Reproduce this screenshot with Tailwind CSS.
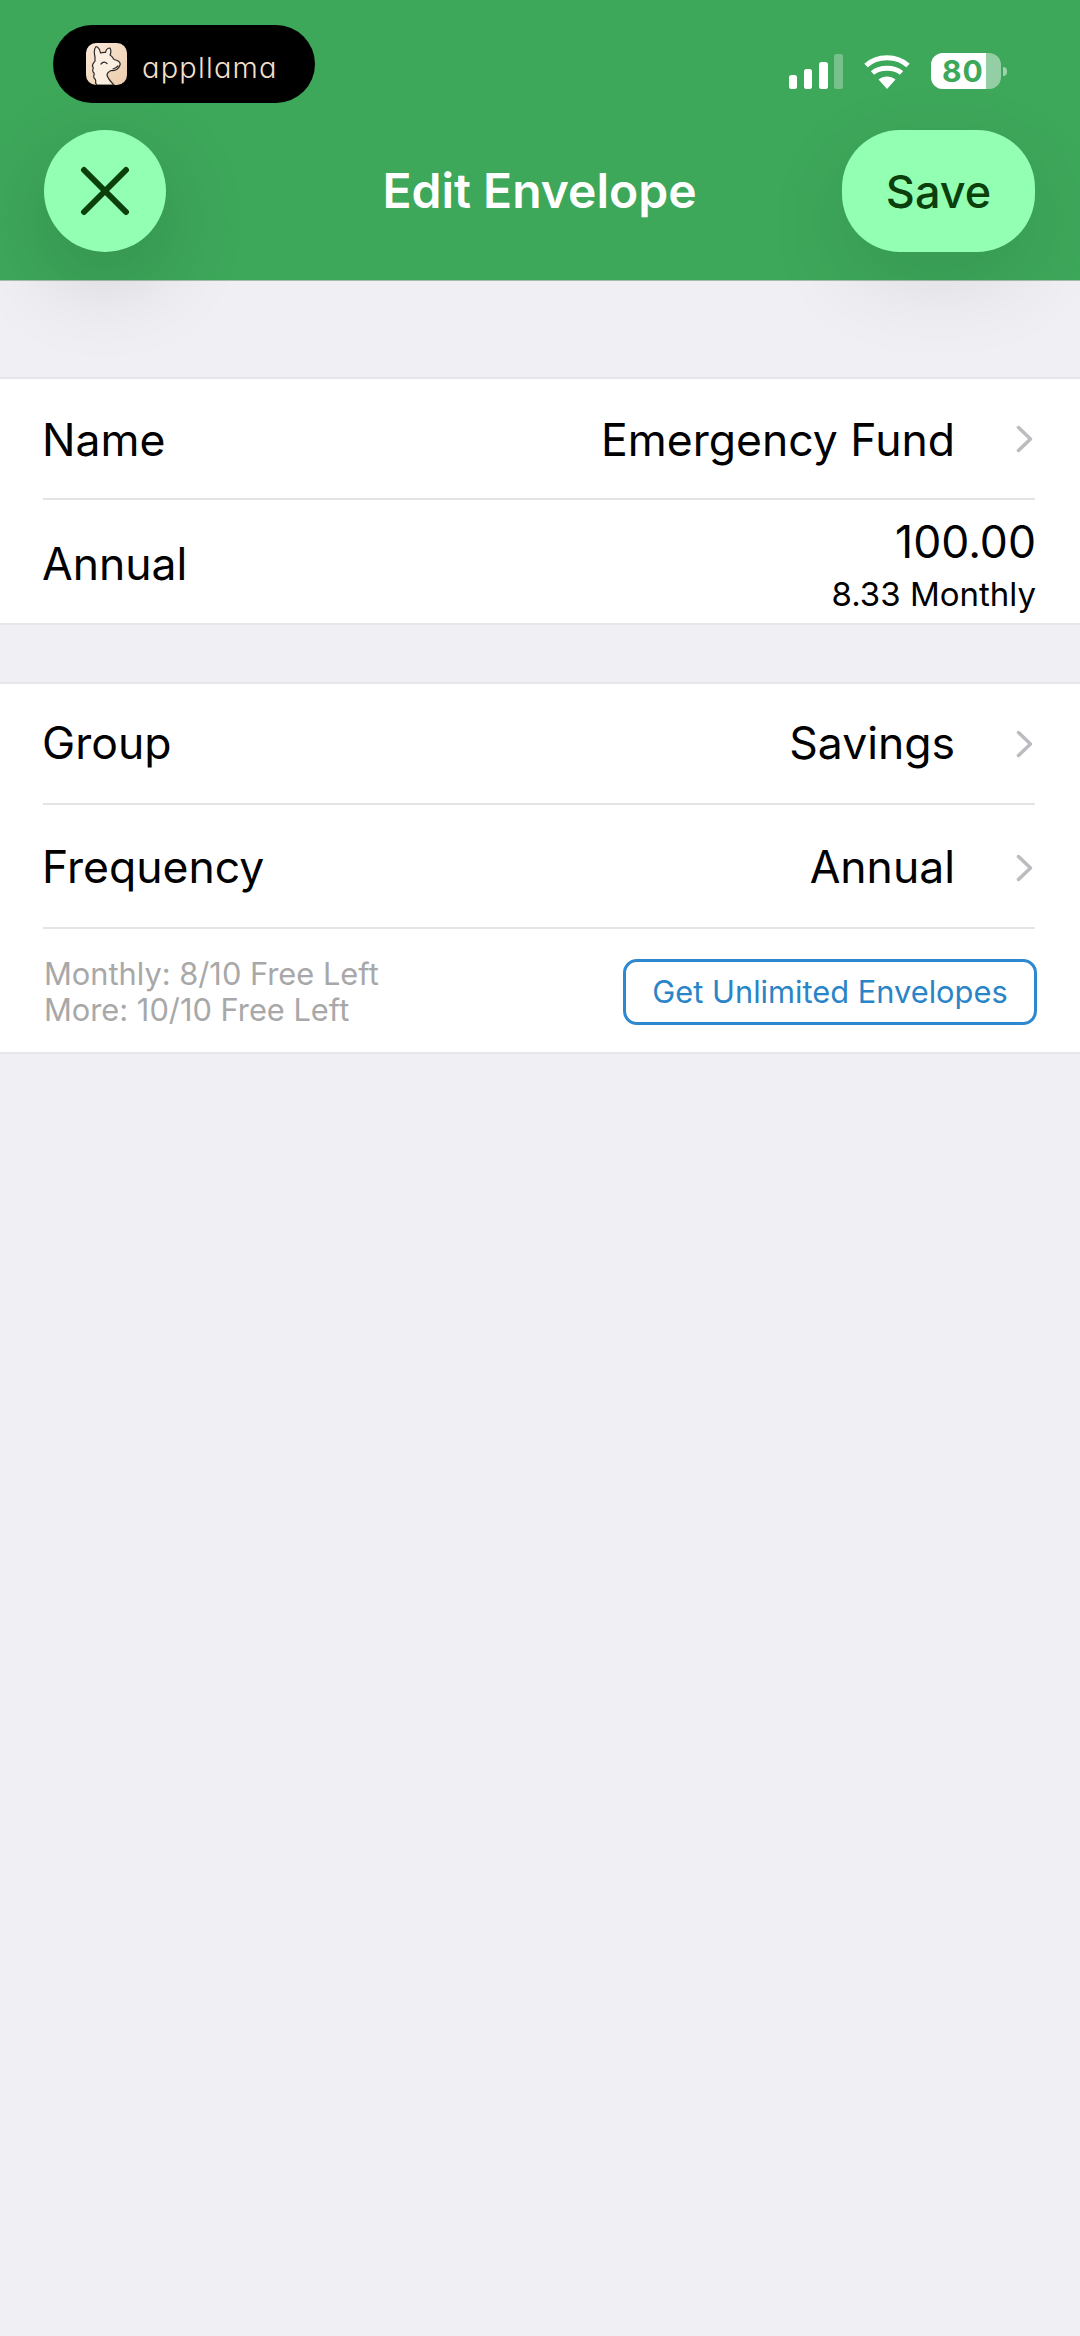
<!doctype html>
<html>
<head>
<meta charset="utf-8">
<script src="https://cdn.jsdelivr.net/npm/@tailwindcss/browser@4"></script>
</head>
<body class="m-0 bg-[#efeff4]">
<div class="w-[1080px] h-[2336px] overflow-hidden bg-[#efeff4] font-['Inter','Liberation_Sans',sans-serif] text-black">
  <header class="relative z-10 h-[281px] bg-[#3da75a] border-b border-[#a5bcae]">
    <div class="flex justify-between items-start h-[130px]">
      <div class="mt-[25px] ml-[53px] w-[262px] h-[78px] rounded-full bg-black flex items-center pl-[33px] gap-[15px]">
        <svg width="41" height="42" viewBox="0 0 41 42" class="shrink-0">
          <defs><linearGradient id="g" x1="0" y1="0" x2="1" y2="1"><stop offset="0" stop-color="#fbe9d8"/><stop offset="1" stop-color="#ecccab"/></linearGradient></defs>
          <rect width="41" height="42" rx="10" fill="url(#g)"/>
          <path d="M11 42c-3-2 0-4-2-6c-3-2 0-4-1-6c-3-2 0-4-1-6c-2-2 1-4 2-6L9 14C8 10 8 6 10 3.500C12 4 14 7 14.500 10C16 9.500 18 9 19.500 9.500C20 7 22 5 24 5C25 7 25 10 24 12C26 13 27 15 28 16.500C31 17 35 19 34 22C33 26 29 28 25 27.500C22 29 21 30 21 32C22 36 25 39 28 42Z" fill="#fbefe2" stroke="#2c2a28" stroke-width="1.200" stroke-linejoin="round"/>
          <path d="M15 21Q18 17.500 21 20.500M27 26Q30 25 32 23" fill="none" stroke="#2c2a28" stroke-width="1.200" stroke-linecap="round"/>
        </svg>
        <span class="mt-[7px] text-[29px] font-light leading-none tracking-[1.200px] text-[#f2dfcb] font-['Inter',sans-serif] [font-feature-settings:'cv11']">appllama</span>
      </div>
      <div class="mt-[53px] mr-[73px] flex items-start">
        <svg width="54" height="36" viewBox="0 0 54 36" class="mt-px">
          <rect x="0" y="21" width="8" height="14" rx="2.500" fill="#fff"/>
          <rect x="15" y="15" width="8" height="20" rx="2.500" fill="#fff"/>
          <rect x="30" y="8" width="9" height="27" rx="2.500" fill="#fff"/>
          <rect x="45" y="0" width="9" height="35" rx="2.500" fill="#fff" fill-opacity="0.3"/>
        </svg>
        <svg width="46" height="34" viewBox="0 0 46 34" class="ml-[21px] mt-[2px]">
          <path d="M23 34L14.500 24.500C19.500 20.500 26.500 20.500 31.500 24.500Z" fill="#fff"/>
          <path d="M8.500 18C15.500 11.500 30.500 11.500 37.500 18" fill="none" stroke="#fff" stroke-width="5"/>
          <path d="M2 10.500C13 0 33 0 44 10.500" fill="none" stroke="#fff" stroke-width="5"/>
        </svg>
        <div class="ml-[21px] relative w-[70px] h-[36px] rounded-[12px] overflow-hidden bg-white/45">
          <div class="w-[55px] h-full bg-white"></div>
          <span class="absolute left-[11px] top-0 h-full flex items-center text-[30px] leading-none font-bold text-[#3da75a] tracking-[1px]">80</span>
        </div>
        <div class="ml-[2px] mt-[14px] w-[4px] h-[9px] rounded-r-full bg-white/50"></div>
      </div>
    </div>
    <div class="grid grid-cols-[1fr_auto_1fr] items-center pl-[44px] pr-[45px] h-[122px]">
      <button class="w-[122px] h-[122px] rounded-full bg-[#92ffb3] flex items-center justify-center shadow-[0_30px_90px_rgba(0,0,0,0.15)]">
        <svg width="50" height="50" viewBox="0 0 50 50"><path d="M4 4L46 46M46 4L4 46" stroke="#0b3f0b" stroke-width="6" stroke-linecap="round"/></svg>
      </button>
      <h1 class="text-[48px] leading-none font-semibold text-white">Edit Envelope</h1>
      <button class="justify-self-end w-[193px] h-[122px] rounded-[58px] bg-[#92ffb3] text-[#0b3f0b] text-[45px] leading-none font-medium shadow-[0_30px_90px_rgba(0,0,0,0.09)]">Save</button>
    </div>
  </header>

  <section class="mt-[96px] bg-white border-y-2 border-[#e6e6e9]">
    <div class="h-[121px] ml-[43px] mr-[45px] flex items-center justify-between border-b-2 border-[#e4e4e6]">
      <span class="-ml-px pt-[3px] text-[44.500px] leading-none">Name</span>
      <div class="flex items-center gap-[61px] mr-[2px]">
        <span class="pt-[3px] text-[44.500px] leading-none">Emergency Fund</span>
        <svg width="17" height="28" viewBox="0 0 17 28"><path d="M2.500 2.500L14.500 14L2.500 25.500" fill="none" stroke="#bcbcc0" stroke-width="3.500" stroke-linecap="round" stroke-linejoin="round"/></svg>
      </div>
    </div>
    <div class="h-[123px] ml-[43px] mr-[44px] flex items-center justify-between pt-[6px]">
      <span class="-ml-px text-[44.500px] leading-none">Annual</span>
      <div class="flex flex-col items-end pt-[2px]">
        <span class="text-[44.500px] leading-none">100.00</span>
        <span class="text-[33px] leading-none mt-[13px]">8.33 Monthly</span>
      </div>
    </div>
  </section>

  <section class="mt-[57px] bg-white border-y-2 border-[#e6e6e9]">
    <div class="h-[121px] ml-[43px] mr-[45px] flex items-center justify-between border-b-2 border-[#e4e4e6]">
      <span class="-ml-px text-[44.500px] leading-none">Group</span>
      <div class="flex items-center gap-[61px] mr-[2px]">
        <span class="text-[44.500px] leading-none">Savings</span>
        <svg width="17" height="28" viewBox="0 0 17 28"><path d="M2.500 2.500L14.500 14L2.500 25.500" fill="none" stroke="#bcbcc0" stroke-width="3.500" stroke-linecap="round" stroke-linejoin="round"/></svg>
      </div>
    </div>
    <div class="h-[124px] ml-[43px] mr-[45px] flex items-center justify-between border-b-2 border-[#e4e4e6] pt-[3px]">
      <span class="-ml-px text-[44.500px] leading-none">Frequency</span>
      <div class="flex items-center gap-[61px] mr-[2px]">
        <span class="text-[44.500px] leading-none">Annual</span>
        <svg width="17" height="28" viewBox="0 0 17 28"><path d="M2.500 2.500L14.500 14L2.500 25.500" fill="none" stroke="#bcbcc0" stroke-width="3.500" stroke-linecap="round" stroke-linejoin="round"/></svg>
      </div>
    </div>
    <div class="h-[123px] ml-[43px] mr-[43px] flex items-center justify-between pt-[3px]">
      <div class="text-[30.800px] leading-[36px] text-[#a8a8a8] ml-px">
        <div>Monthly: 8/10 Free Left</div>
        <div>More: 10/10 Free Left</div>
      </div>
      <button class="w-[414px] h-[66px] rounded-[14px] border-[3px] border-[#2d88d0] text-[#2a84c8] text-[30.800px] leading-none">Get Unlimited Envelopes</button>
    </div>
  </section>
</div>
</body>
</html>
